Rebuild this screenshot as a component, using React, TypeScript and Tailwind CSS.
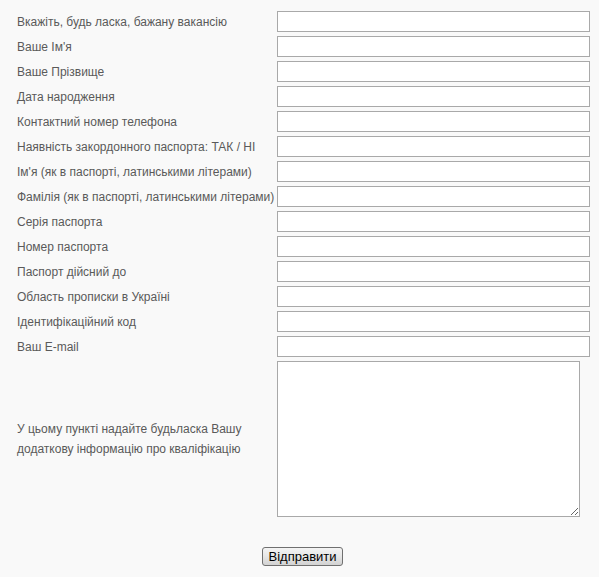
import React from 'react';

const fields = [
  'Вкажіть, будь ласка, бажану вакансію',
  "Ваше Ім'я",
  'Ваше Прізвище',
  'Дата народження',
  'Контактний номер телефона',
  'Наявність закордонного паспорта: ТАК / НІ',
  "Ім'я (як в паспорті, латинськими літерами)",
  'Фамілія (як в паспорті, латинськими літерами)',
  'Серія паспорта',
  'Номер паспорта',
  'Паспорт дійсний до',
  'Область прописки в Україні',
  'Ідентифікаційний код',
  'Ваш E-mail',
];

const App: React.FC = () => {
  return (
    <div
      className="min-h-screen bg-[#f9f9f9] text-[12px] text-[#5a5a5a]"
      style={{ fontFamily: '"Liberation Sans", Arial, sans-serif' }}
    >
      <form className="w-[573px] ml-[17px] pt-[9px]" onSubmit={(e) => e.preventDefault()}>
        {/* Fields */}
        <div className="grid grid-cols-[260px_313px]">
          {fields.map((label) => (
            <React.Fragment key={label}>
              <div className="h-[25px] flex items-center whitespace-nowrap">{label}</div>
              <div className="h-[25px] flex items-center">
                <input
                  type="text"
                  className="w-[313px] h-[21px] bg-white border border-[#a9a9a9] px-1 text-[12px] text-[#333] outline-none"
                />
              </div>
            </React.Fragment>
          ))}

          {/* Additional info */}
          <div className="flex items-center leading-[20px] py-[2px]">
            У цьому пункті надайте будьласка Вашу
            <br />
            додаткову інформацію про кваліфікацію
          </div>
          <div className="py-[2px]">
            <textarea className="block w-[303px] h-[156px] bg-white border border-[#a9a9a9] p-1 text-[12px] text-[#333] outline-none" />
          </div>
        </div>

        {/* Submit */}
        <div className="flex justify-center pt-[28px] pr-[2px]">
          <button
            type="submit"
            className="h-[19px] w-[81px] rounded-[3px] border border-[#707070] bg-gradient-to-b from-[#f4f4f4] via-[#e6e6e6] to-[#d2d2d2] text-[13px] leading-none text-black"
          >
            Відправити
          </button>
        </div>
      </form>
    </div>
  );
};

export default App;
